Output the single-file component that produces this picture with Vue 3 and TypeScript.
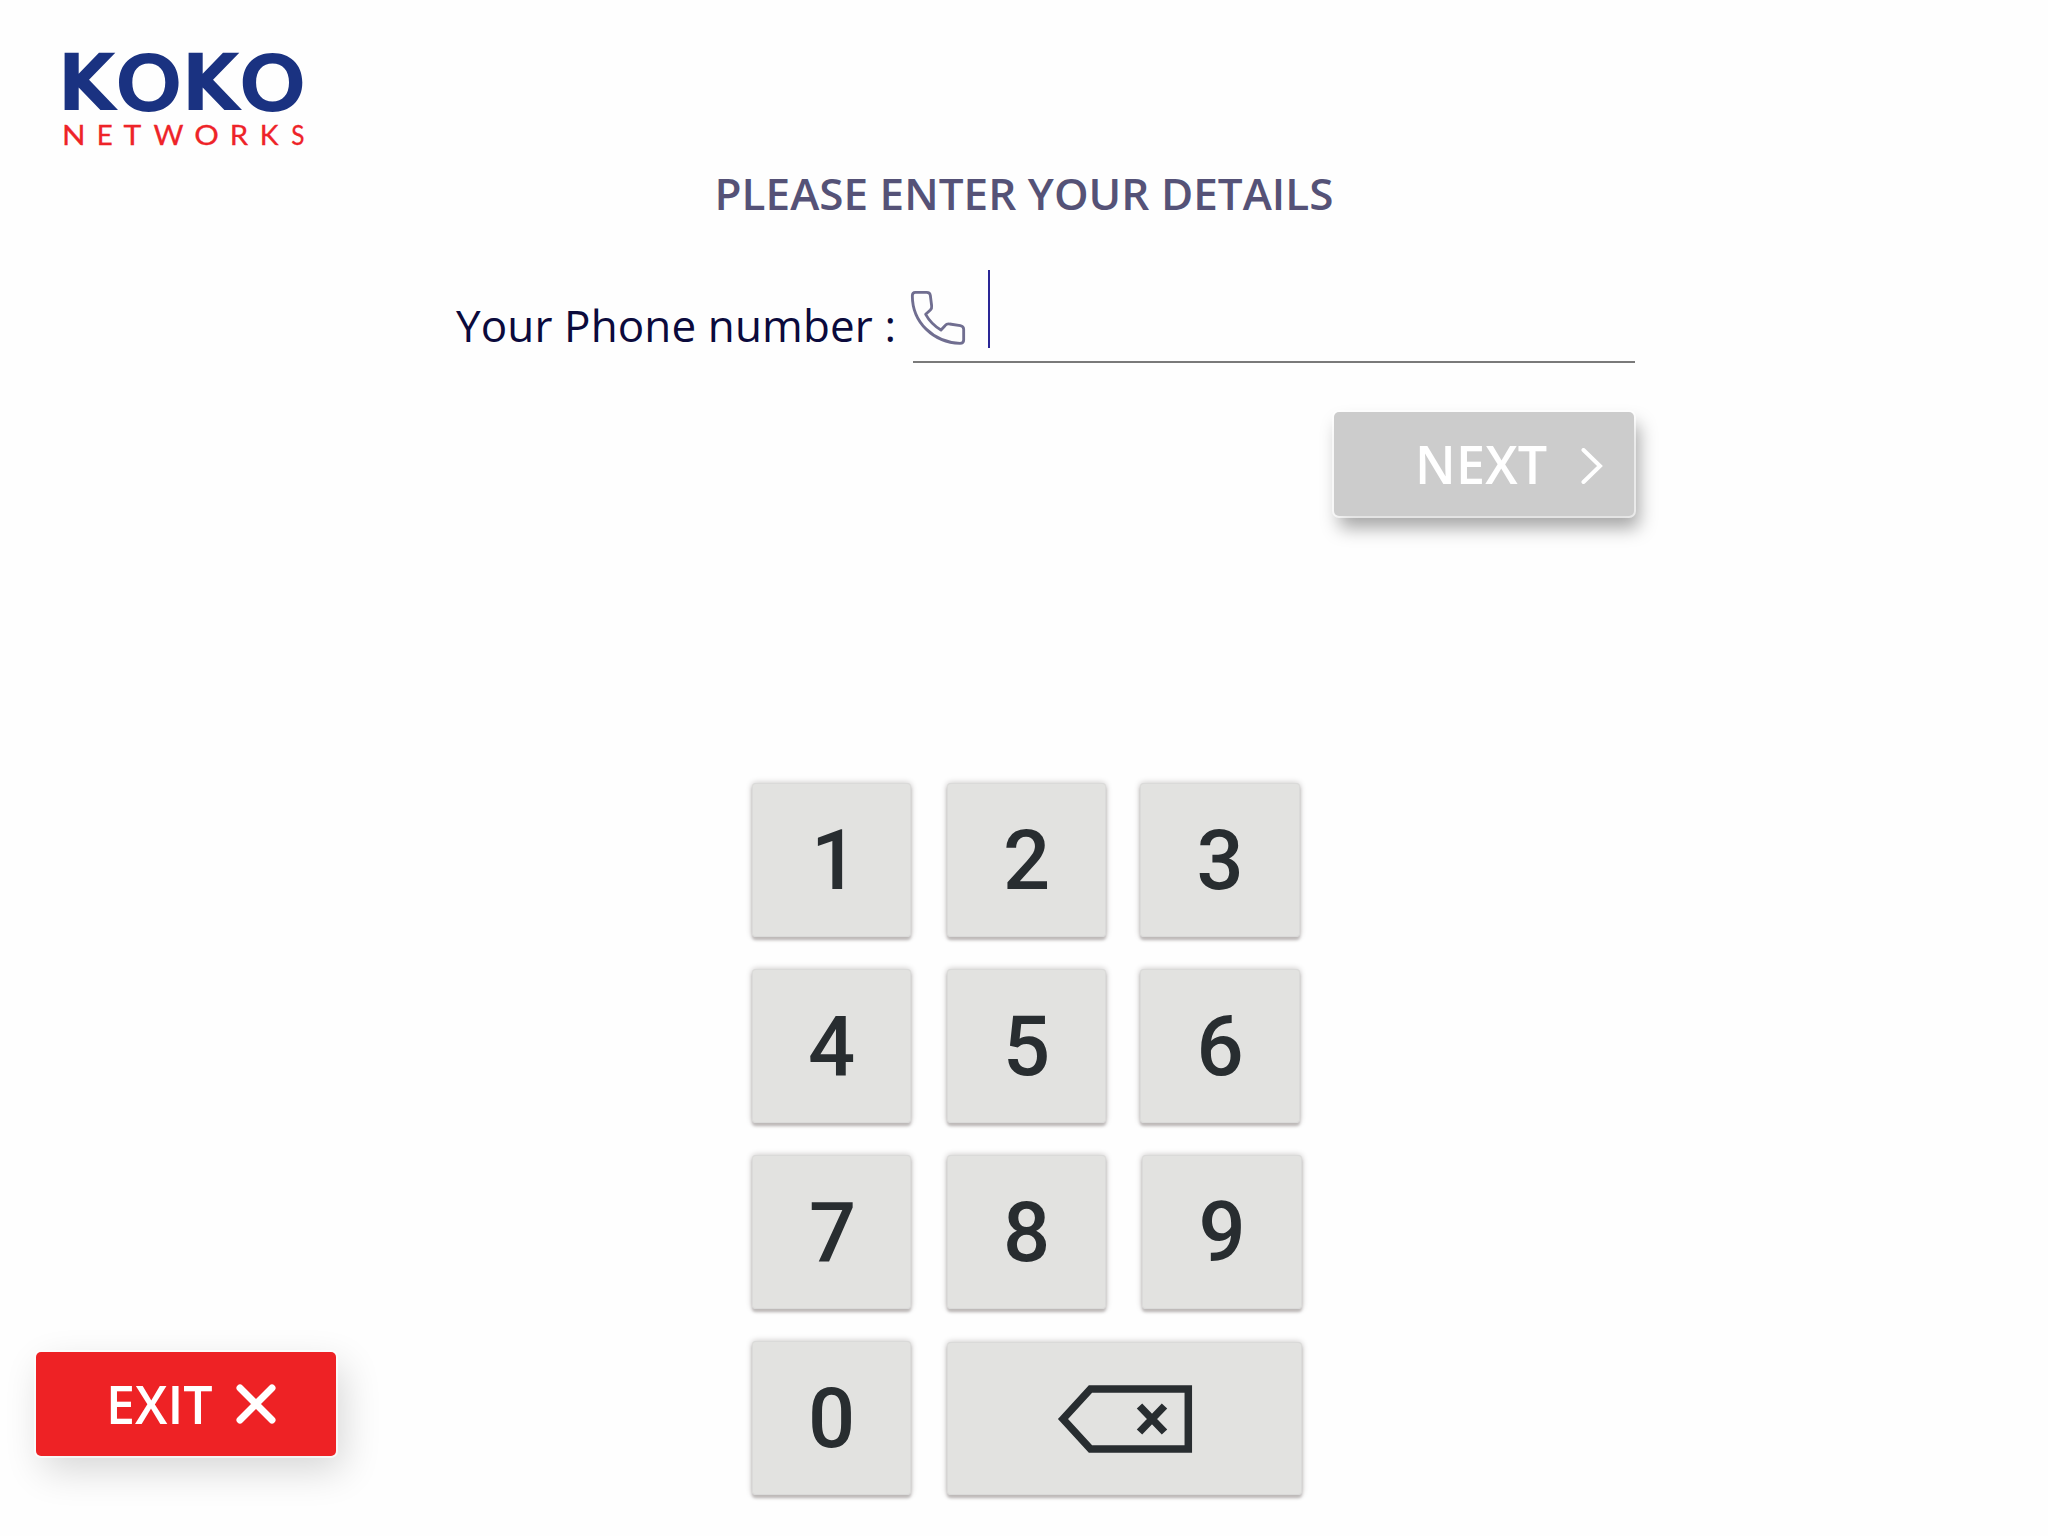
<script setup lang="ts">
import { ref } from 'vue'

interface Glyph {
  char: string
  x: number
  width: number
}

// x and width are advance boxes: the letter plus its side bearings
const brand: Glyph[] = [
  { char: 'K', x: -2.3, width: 58 },
  { char: 'O', x: 55, width: 67.6 },
  { char: 'K', x: 121.7, width: 58 },
  { char: 'O', x: 178.7, width: 67.6 },
]

const tagline: Glyph[] = [
  { char: 'N', x: 2, width: 23.6 },
  { char: 'E', x: 36.8, width: 16 },
  { char: 'T', x: 63.4, width: 17.8 },
  { char: 'W', x: 93.5, width: 30 },
  { char: 'O', x: 134.3, width: 24.6 },
  { char: 'R', x: 169.8, width: 18.4 },
  { char: 'K', x: 199.8, width: 18.8 },
  { char: 'S', x: 231.2, width: 13.2 },
]

const rows: string[][] = [
  ['1', '2', '3'],
  ['4', '5', '6'],
  ['7', '8', '9'],
]

const phone = ref('')

function press(digit: string): void {
  phone.value += digit
}

function erase(): void {
  phone.value = phone.value.slice(0, -1)
}
</script>

<template>
  <div class="page">
    <header class="header">
      <svg class="logo" width="280" height="150" viewBox="-10 -30 280 150" role="img" aria-label="Koko Networks">
        <text
          v-for="(g, i) in brand"
          :key="'b' + i"
          :class="g.char === 'K' ? 'brand-k' : 'brand-o'"
          :x="g.x"
          :y="g.char === 'K' ? 70.3 : 70.6"
          :textLength="g.width"
          lengthAdjust="spacingAndGlyphs"
        >{{ g.char }}</text>
        <text
          v-for="(g, i) in tagline"
          :key="'t' + i"
          class="tagline"
          :x="g.x"
          y="105.2"
          :textLength="g.width"
          lengthAdjust="spacingAndGlyphs"
        >{{ g.char }}</text>
      </svg>
    </header>

    <h1 class="title">PLEASE ENTER YOUR DETAILS</h1>

    <div class="form-row">
      <label class="label">Your Phone number :</label>
      <div class="field">
        <svg class="phone" width="60" height="60" viewBox="0 0 180 180" aria-hidden="true">
          <path
            d="M36 38H70Q80 38 81 47L85 79Q86 86 81 91L67 104C78 124 93 139 113 151L125 138Q131 131 139 133L171 138Q181 140 181 149V181Q181 191 170 191C90 188 27 128 27 48Q27 38 36 38Z"
            transform="translate(-20 -28)"
          />
        </svg>
        <span class="value">{{ phone }}</span>
        <span class="caret" />
      </div>
    </div>

    <div class="actions">
      <button class="btn next" type="button">
        <span>NEXT</span>
        <svg width="22" height="36" viewBox="0 0 22 36" aria-hidden="true">
          <path d="M2.500 2L19 18L2.500 34" />
        </svg>
      </button>
    </div>

    <div class="bottom">
      <button class="btn exit" type="button">
        <span>EXIT</span>
        <svg width="40" height="40" viewBox="0 0 40 40" aria-hidden="true">
          <path d="M4 4L36 36M36 4L4 36" />
        </svg>
      </button>

      <div class="keypad">
        <div v-for="(row, r) in rows" :key="r" class="keys" :class="{ wide: r === 2 }">
          <button v-for="d in row" :key="d" class="key" :class="'d' + d" type="button" @click="press(d)">{{ d }}</button>
        </div>
        <div class="keys">
          <button class="key" type="button" @click="press('0')">0</button>
          <button class="key erase" type="button" aria-label="Delete" @click="erase">
            <svg width="136" height="70" viewBox="0 0 136 70" aria-hidden="true">
              <path class="outline" d="M6 35L33.500 5H131.300V65H33.500Z" />
              <path class="cross" d="M82.500 22L107.500 48M107.500 22L82.500 48" />
            </svg>
          </button>
        </div>
      </div>
    </div>
  </div>
</template>

<style>
body {
  margin: 0;
  background: #fefefe;
}
</style>

<style scoped>
.page {
  display: flex;
  flex-direction: column;
  width: 2048px;
  height: 1536px;
  overflow: hidden;
  font-family: "Open Sans", "Noto Sans", sans-serif;
}

button {
  border: 0;
  padding: 0;
  font-family: inherit;
}

.header {
  display: flex;
  height: 150px;
  padding: 10px 50px 0;
}

.logo {
  display: block;
}

.brand-k {
  font-family: "DejaVu Sans", sans-serif;
  font-size: 77.8px;
  font-weight: 700;
  fill: #1a3281;
}

.brand-o {
  font-family: Inter, sans-serif;
  font-size: 79px;
  font-weight: 700;
  fill: #1a3281;
}

.tagline {
  font-family: Lato, sans-serif;
  font-size: 27.3px;
  font-weight: 400;
  fill: #ee2328;
  stroke: #ee2328;
  stroke-width: 0.3;
}

.title {
  margin: 3px 0 0;
  height: 60px;
  line-height: 60px;
  font-size: 44px;
  font-weight: 600;
  letter-spacing: 0.04px;
  text-align: center;
  color: #555277;
}

.form-row {
  display: flex;
  margin: 47px 413px 0 456px;
  height: 93px;
}

.label {
  width: 457px;
  line-height: 60px;
  padding-top: 25px;
  font-size: 44px;
  letter-spacing: 0.12px;
  color: #0b0a3c;
  white-space: nowrap;
  box-sizing: border-box;
}

.field {
  display: flex;
  flex: 1;
  border-bottom: 2px solid #7a7a7a;
}

.phone {
  flex: none;
  margin: 19px 0 0 -3px;
}

.phone path {
  fill: none;
  stroke: #706e90;
  stroke-width: 8.5;
  stroke-linejoin: round;
}

.value {
  margin-left: 18px;
  font-size: 44px;
  line-height: 90px;
}

.caret {
  width: 2px;
  height: 78px;
  background: #2a2796;
}

.actions {
  display: flex;
  justify-content: flex-end;
  padding: 49px 414px 0 0;
}

.btn {
  display: flex;
  align-items: center;
  width: 300px;
  height: 104px;
  border-radius: 5px;
  font-size: 52px;
  font-weight: 600;
  color: #fff;
}

.btn span {
  margin-top: -2px;
}

.btn path {
  fill: none;
  stroke: #fff;
  stroke-linecap: round;
}

.next {
  padding-left: 81px;
  background: #ccc;
  box-shadow: 0 0 0 2px rgba(255, 255, 255, 0.65), 5px 12px 18px rgba(0, 0, 0, 0.35);
}

.next span {
  letter-spacing: 0.2px;
}

.next svg {
  margin: 3px 0 0 34px;
}

.next path {
  stroke-width: 4;
}

.bottom {
  display: flex;
  align-items: flex-end;
  flex: 1;
  padding: 0 0 41px 36px;
}

.exit {
  margin-bottom: 39px;
  padding-left: 70px;
  background: #ee2225;
  box-shadow: 0 0 0 2px rgba(255, 255, 255, 0.65), 7px 14px 38px rgba(0, 0, 0, 0.16);
}

.exit svg {
  margin-left: 23px;
}

.exit path {
  stroke-width: 7;
}

.keypad {
  display: flex;
  flex-direction: column;
  gap: 32px;
  margin-left: 416px;
}

.keys {
  display: flex;
  gap: 36px;
}

.key {
  box-sizing: border-box;
  width: 159px;
  height: 154px;
  padding-top: 2px;
  border-radius: 4px;
  background: #e2e2e0;
  box-shadow: inset 0 0 0 1px #dadad9, 0 3px 3px #bdb9b8, 0 0 6px #c4c1c0;
  font-family: Roboto, sans-serif;
  font-size: 83px;
  font-weight: 500;
  line-height: 100px;
  color: #282d30;
}

.key:nth-child(3) {
  margin-left: -2px;
  width: 160px;
}

.wide .key:nth-child(3) {
  margin-left: 0;
}

.d1 {
  padding-left: 6px;
}

.d7 {
  padding-left: 2px;
  padding-top: 4px;
}

.erase {
  display: flex;
  align-items: center;
  width: 355px;
  height: 153px;
  margin-top: 1px;
  padding: 0 0 0 110px;
}

.erase svg {
  margin-top: 1px;
}

.erase path {
  fill: none;
  stroke: #282d30;
  stroke-width: 7.500;
}
</style>
